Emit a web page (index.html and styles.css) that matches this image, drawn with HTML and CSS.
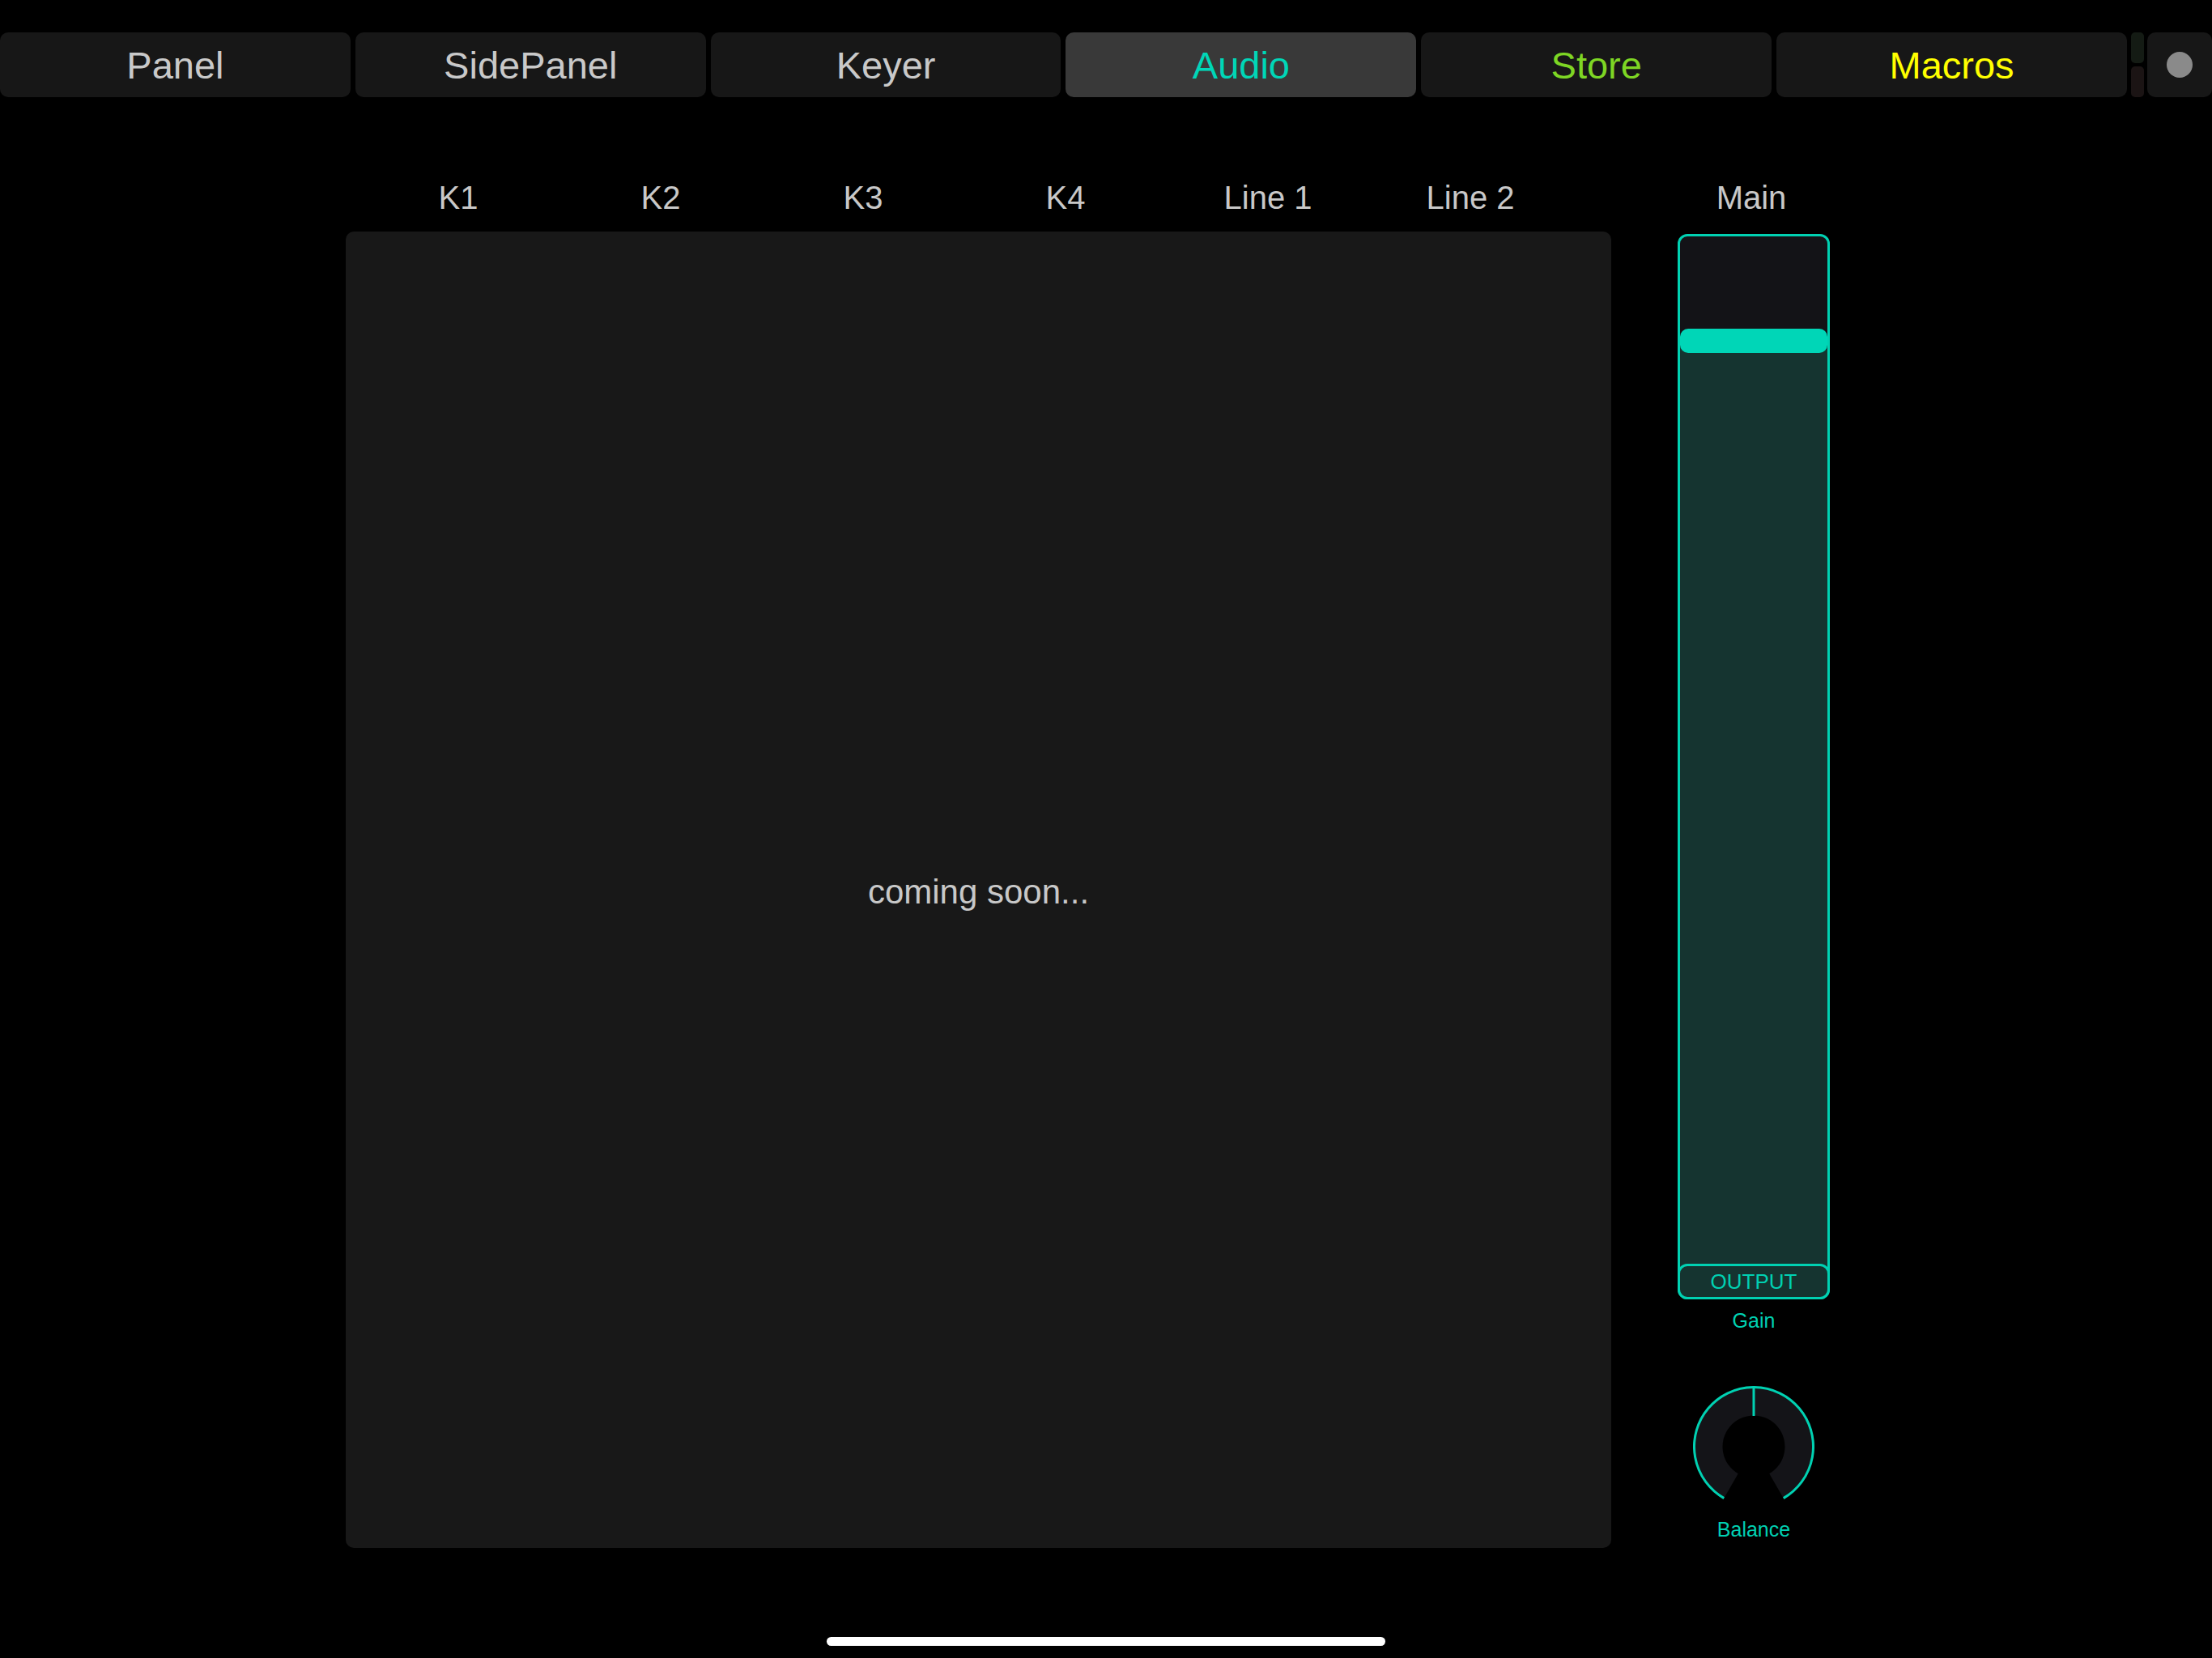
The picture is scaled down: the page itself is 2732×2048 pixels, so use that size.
FILE: index.html
```html
<!DOCTYPE html>
<html lang="en">
<head>
<meta charset="utf-8">
<title>Audio</title>
<link rel="stylesheet" href="styles.css">
</head>
<body>
<div class="app">
  <nav class="tabs">
    <div class="tab">Panel</div>
    <div class="tab">SidePanel</div>
    <div class="tab">Keyer</div>
    <div class="tab tab-active tab-audio">Audio</div>
    <div class="tab tab-store">Store</div>
    <div class="tab tab-macros">Macros</div>
    <div class="status">
      <div class="status-bar status-green"></div>
      <div class="status-bar status-red"></div>
    </div>
    <div class="record"><span class="record-dot"></span></div>
  </nav>

  <main class="stage">
    <section class="mixer">
      <div class="colhead channels">
        <div class="channel">K1</div>
        <div class="channel">K2</div>
        <div class="channel">K3</div>
        <div class="channel">K4</div>
        <div class="channel">Line 1</div>
        <div class="channel">Line 2</div>
      </div>
      <div class="panel">
        <span class="soon">coming soon...</span>
      </div>
    </section>

    <section class="master">
      <div class="colhead master-head">Main</div>
      <div class="fader">
        <div class="handle"></div>
        <div class="output">OUTPUT</div>
      </div>
      <div class="cap gain">Gain</div>
      <svg class="knob" width="150" height="150" viewBox="0 0 150 150">
        <path class="knob-body" d="M 38.25 138.65 A 73.5 73.5 0 1 1 111.75 138.65 L 94.25 108.34 A 38.5 38.5 0 1 0 55.75 108.34 Z"/>
        <path class="knob-ring" d="M 38.25 138.65 A 73.5 73.5 0 1 1 111.75 138.65"/>
        <path class="knob-ring" d="M 75 1.5 L 75 37"/>
      </svg>
      <div class="cap balance">Balance</div>
    </section>
  </main>

  <div class="home-indicator"></div>
</div>
</body>
</html>
```

FILE: styles.css
```css
html, body {
  margin: 0;
  padding: 0;
  background: #000;
}

body {
  width: 2732px;
  height: 2048px;
  overflow: hidden;
  font-family: "Liberation Sans", Arial, Helvetica, sans-serif;
  color: #c8c8c8;
}

.app {
  position: relative;
  width: 2732px;
  height: 2048px;
}

/* ---------- top tabs ---------- */
.tabs {
  display: flex;
  gap: 6px;
  padding-top: 40px;
  height: 80px;
}

.tab {
  flex: 1 1 0;
  height: 80px;
  background: #171717;
  border-radius: 10px;
  display: flex;
  align-items: center;
  justify-content: center;
  font-size: 47px;
  color: #c9c9c9;
}

.tab-active {
  background: #393939;
}

.tab-audio { color: #00d6b7; }
.tab-store { color: #7ed624; }
.tab-macros { color: #ffff00; }

.status {
  flex: 0 0 16px;
  display: flex;
  flex-direction: column;
  gap: 4px;
  margin-left: -1px;
}

.status-bar {
  flex: 1;
  border-radius: 5px;
}

.status-green { background: #141b14; }
.status-red { background: #1b1414; }

.record {
  flex: 0 0 80px;
  margin-left: -2px;
  background: #171717;
  border-radius: 10px;
  display: flex;
  align-items: center;
  justify-content: center;
}

.record-dot {
  width: 32px;
  height: 32px;
  border-radius: 50%;
  background: #8a8a8a;
}

/* ---------- stage ---------- */
.stage {
  display: flex;
  padding-left: 427px;
}

.colhead {
  height: 166px;
  box-sizing: border-box;
  padding-top: 100px;
  font-size: 40px;
  line-height: 48px;
  color: #c8c8c8;
}

.mixer {
  width: 1563px;
}

.channels {
  display: flex;
  padding-left: 14px;
}

.channel {
  width: 250px;
  text-align: center;
}

.panel {
  height: 1626px;
  background: #181818;
  border-radius: 10px;
  display: flex;
  align-items: center;
  justify-content: center;
}

.soon {
  padding-top: 6px;
  font-size: 42px;
  color: #c8c8c8;
}

/* ---------- master strip ---------- */
.master {
  width: 188px;
  margin-left: 82px;
  display: flex;
  flex-direction: column;
  align-items: center;
}

.master-head {
  width: 100%;
  padding-right: 6px;
  text-align: center;
}

.fader {
  width: 188px;
  height: 1316px;
  margin-top: 3px;
  box-sizing: border-box;
  border: 3px solid #00d1b2;
  border-radius: 12px;
  background: linear-gradient(#131317 0, #131317 129px, #153430 129px, #153430 100%);
  display: flex;
  flex-direction: column;
}

.handle {
  height: 30px;
  margin-top: 114px;
  border-radius: 10px;
  background: #00d6b7;
}

.output {
  margin: auto -3px -3px;
  height: 44px;
  box-sizing: border-box;
  border: 3px solid #00d1b2;
  border-radius: 12px;
  background: #153430;
  color: #00d1b2;
  font-size: 26px;
  line-height: 38px;
  text-align: center;
}

.cap {
  font-size: 25px;
  line-height: 30px;
  color: #00d1b2;
  text-align: center;
}

.gain {
  margin-top: 11px;
}

.knob {
  display: block;
  margin-top: 66px;
}

.knob-body {
  fill: #141418;
}

.knob-ring {
  fill: none;
  stroke: #00d1b2;
  stroke-width: 3;
}

.balance {
  margin-top: 12px;
}

/* ---------- iOS home indicator ---------- */
.home-indicator {
  position: absolute;
  left: 1021px;
  bottom: 15px;
  width: 690px;
  height: 11px;
  border-radius: 6px;
  background: #fff;
}
```
